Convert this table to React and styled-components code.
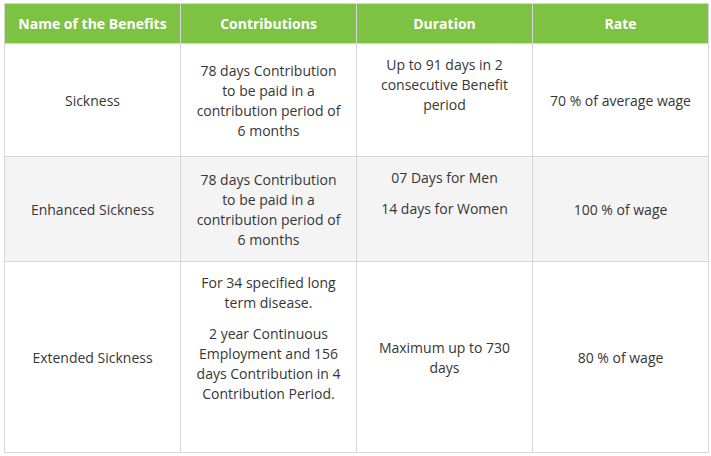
import React from 'react';
import styled, { createGlobalStyle } from 'styled-components';

const Global = createGlobalStyle`
  html, body {
    margin: 0;
    padding: 0;
    background: #ffffff;
  }
  body {
    font-family: "Open Sans", "Noto Sans", "Liberation Sans", sans-serif;
    color: #363636;
  }
`;

const Page = styled.div`
  padding: 3px 0 0 4px;
`;

const Table = styled.table`
  width: 705px;
  border-collapse: collapse;
  table-layout: fixed;
`;

const HeadCell = styled.th`
  height: 40px;
  padding: 0 8px;
  background: #7dc242;
  color: #ffffff;
  font-size: 14px;
  font-weight: 700;
  text-align: center;
  border: 1px solid #d6d6d6;
  box-sizing: border-box;
`;

const Row = styled.tr`
  background: ${(p) => (p.$shade ? '#f4f4f4' : '#ffffff')};
`;

const Cell = styled.td`
  height: ${(p) => p.$h}px;
  padding: ${(p) => (p.$top ? '11px 12px' : '1px 12px 0')};
  vertical-align: ${(p) => (p.$top ? 'top' : 'middle')};
  border: 1px solid #d6d6d6;
  text-align: center;
  font-size: 14px;
  line-height: 20px;
  box-sizing: border-box;
`;

const Para = styled.p`
  margin: 0;
  & + & {
    margin-top: 11px;
  }
`;

const rows = [
  {
    h: 113,
    name: 'Sickness',
    contributions: ['78 days Contribution to be paid in a contribution period of 6 months'],
    duration: ['Up to 91 days in 2 consecutive Benefit period'],
    durationTop: true,
    rate: '70 % of average wage',
  },
  {
    h: 105,
    shade: true,
    name: 'Enhanced Sickness',
    contributions: ['78 days Contribution to be paid in a contribution period of 6 months'],
    duration: ['07 Days for Men', '14 days for Women'],
    durationTop: true,
    rate: '100 % of wage',
  },
  {
    h: 191,
    name: 'Extended Sickness',
    contributions: [
      'For 34 specified long term disease.',
      '2 year Continuous Employment and 156 days Contribution in 4 Contribution Period.',
    ],
    contributionsTop: true,
    duration: ['Maximum up to 730 days'],
    rate: '80 % of wage',
  },
];

export default function App() {
  return (
    <Page>
      <Global />
      <Table>
        <thead>
          <tr>
            <HeadCell>Name of the Benefits</HeadCell>
            <HeadCell>Contributions</HeadCell>
            <HeadCell>Duration</HeadCell>
            <HeadCell>Rate</HeadCell>
          </tr>
        </thead>
        <tbody>
          {rows.map((r) => (
            <Row key={r.name} $shade={r.shade}>
              <Cell $h={r.h}>{r.name}</Cell>
              <Cell $h={r.h} $top={r.contributionsTop}>
                {r.contributions.map((t) => (
                  <Para key={t}>{t}</Para>
                ))}
              </Cell>
              <Cell $h={r.h} $top={r.durationTop}>
                {r.duration.map((t) => (
                  <Para key={t}>{t}</Para>
                ))}
              </Cell>
              <Cell $h={r.h}>{r.rate}</Cell>
            </Row>
          ))}
        </tbody>
      </Table>
    </Page>
  );
}
